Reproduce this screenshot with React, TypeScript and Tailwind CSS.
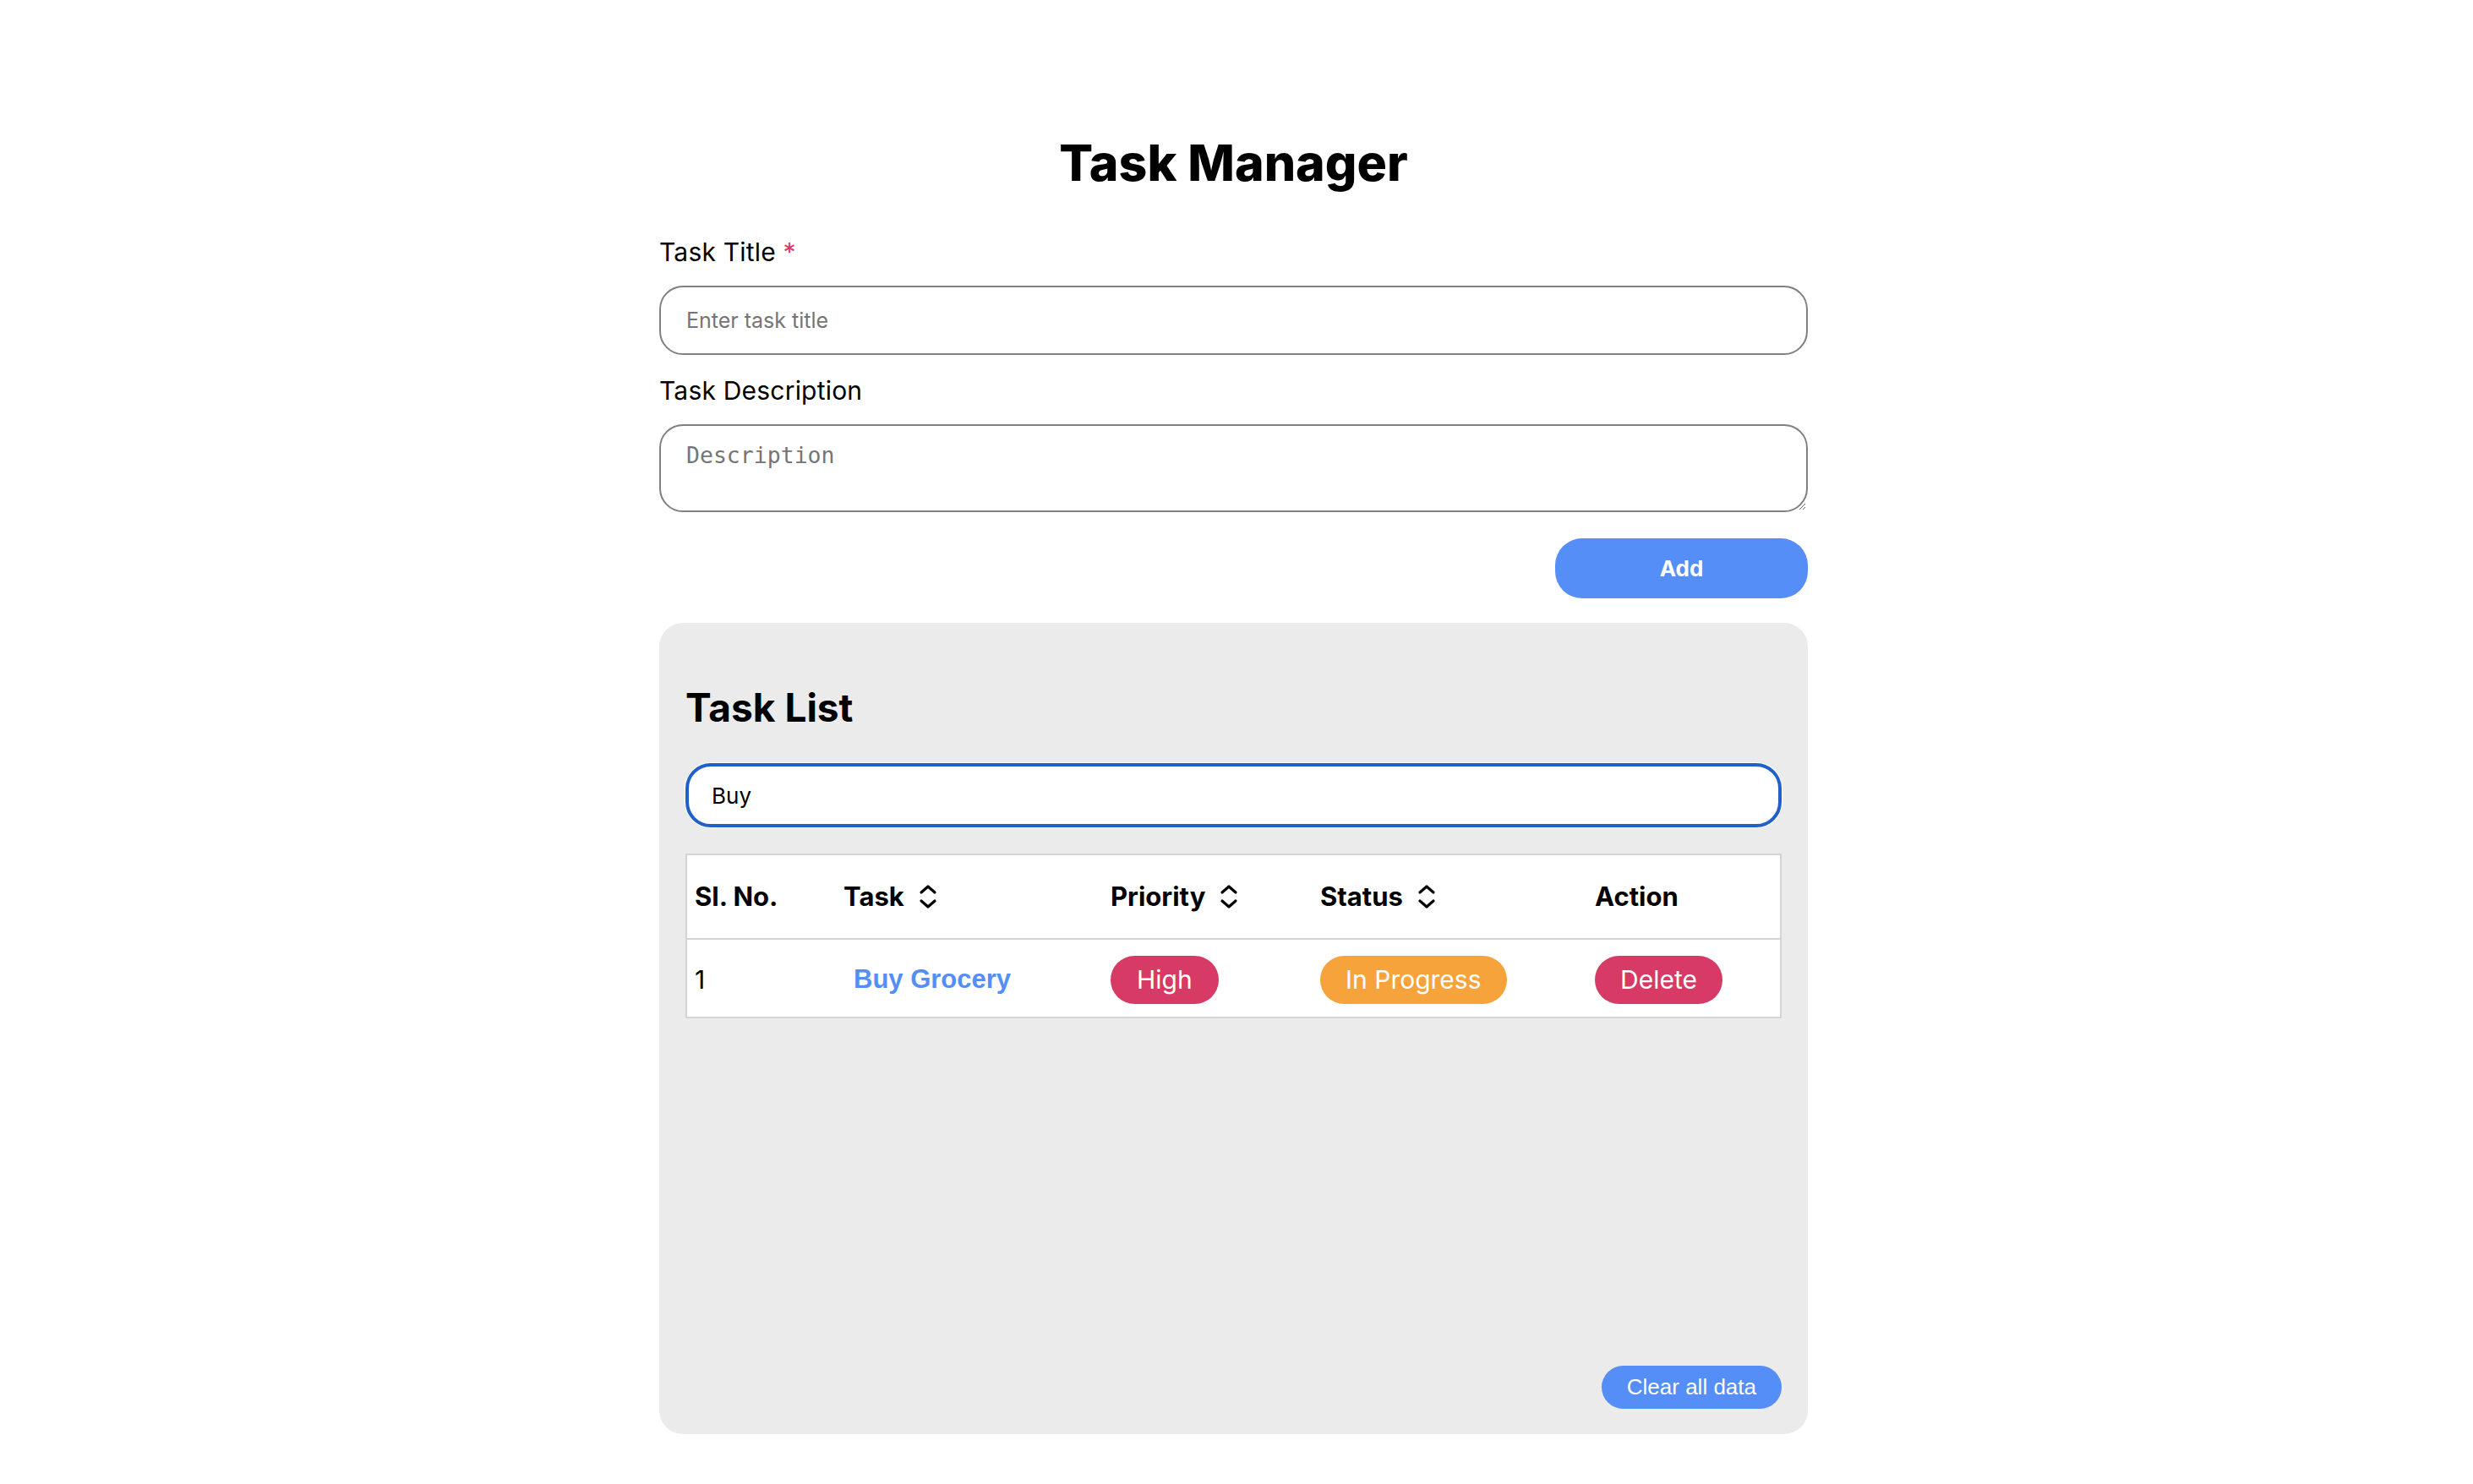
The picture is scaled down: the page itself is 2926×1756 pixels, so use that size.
import { useState } from "react";

type Task = {
  id: number;
  title: string;
  priority: string;
  status: string;
};

function SortIcon() {
  return (
    <svg
      width="24"
      height="32"
      viewBox="0 0 24 32"
      fill="none"
      stroke="currentColor"
      strokeWidth="3.2"
      strokeLinecap="round"
      strokeLinejoin="round"
      className="ml-[16px] shrink-0"
    >
      <path d="M4 11 L12 4 L20 11" />
      <path d="M4 21 L12 28 L20 21" />
    </svg>
  );
}

export default function App() {
  const [search, setSearch] = useState("Buy");
  const [tasks] = useState<Task[]>([
    { id: 1, title: "Buy Grocery", priority: "High", status: "In Progress" },
  ]);

  const visible = tasks.filter((t) =>
    t.title.toLowerCase().includes(search.toLowerCase())
  );

  return (
    <div className="min-h-screen bg-white font-['Inter',sans-serif] text-black">
      <div className="ml-[calc(50%-683px)] flex w-[1359px] flex-col pt-[158px]">
        <h1 className="text-center text-[59px] font-extrabold leading-[70px]">
          Task Manager
        </h1>

        <label className="mt-[52px] block text-[30px] leading-[36px] tracking-[0.2px]">
          Task Title <span className="text-[#d63a65]">*</span>
        </label>
        <input
          placeholder="Enter task title"
          className="mt-[22px] h-[82px] w-full rounded-[28px] border-2 border-[#808080] bg-white px-[30px] text-[25px] placeholder:text-[#757575] focus:outline-none"
        />

        <label className="mt-[24px] block text-[30px] leading-[36px] tracking-[0.2px]">
          Task Description
        </label>
        <textarea
          placeholder="Description"
          className="mt-[22px] h-[104px] w-full rounded-[28px] border-2 border-[#808080] bg-white px-[30px] pt-[15px] font-['DejaVu_Sans_Mono',monospace] text-[26.5px] placeholder:text-[#757575] focus:outline-none"
        />

        <button className="mt-[31px] h-[71px] w-[299px] self-end rounded-[32px] bg-[#548ef6] text-[26px] font-bold text-white">
          Add
        </button>

        <section className="mt-[29px] flex h-[960px] flex-col rounded-[28px] bg-[#ebebeb] px-[31px] pb-[30px] pt-[72px]">
          <h2 className="text-[46px] font-bold leading-[56px]">Task List</h2>

          <input
            value={search}
            onChange={(e) => setSearch(e.target.value)}
            className="mt-[38px] h-[76px] w-full rounded-[30px] border-4 border-[#2160c8] bg-white px-[27px] text-[26px] shadow-[0_0_0_1px_#ffffff] outline-none"
          />

          <div className="mt-[31px] border-2 border-[#d4d4d4] bg-white">
            <div className="grid h-[100px] grid-cols-[176px_316px_248px_325px_1fr] items-center border-b-2 border-[#d4d4d4] text-[31px] font-bold">
              <div className="px-[9px]">Sl. No.</div>
              <div className="flex items-center px-[9px]">
                Task
                <SortIcon />
              </div>
              <div className="flex items-center px-[9px]">
                Priority
                <SortIcon />
              </div>
              <div className="flex items-center px-[9px]">
                Status
                <SortIcon />
              </div>
              <div className="px-[9px]">Action</div>
            </div>

            {visible.map((t, i) => (
              <div
                key={t.id}
                className="grid h-[91px] grid-cols-[176px_316px_248px_325px_1fr] items-center pt-[3px] text-[30px]"
              >
                <div className="px-[9px]">{i + 1}</div>
                <div className="px-[9px]">
                  <span className="pl-[12px] font-['Liberation_Sans',Arial,sans-serif] text-[31px] font-bold text-[#548ef6]">
                    {t.title}
                  </span>
                </div>
                <div className="px-[9px]">
                  <span className="inline-flex h-[57px] items-center rounded-full bg-[#d63a65] px-[31px] text-white">
                    {t.priority}
                  </span>
                </div>
                <div className="px-[9px]">
                  <span className="inline-flex h-[57px] items-center rounded-full bg-[#f5a33a] px-[30px] text-white">
                    {t.status}
                  </span>
                </div>
                <div className="px-[9px]">
                  <button className="inline-flex h-[57px] items-center rounded-full bg-[#d63a65] px-[30px] text-white">
                    Delete
                  </button>
                </div>
              </div>
            ))}
          </div>

          <button className="mt-auto h-[51px] self-end rounded-full bg-[#548ef6] px-[30px] font-['Liberation_Sans',Arial,sans-serif] text-[26px] text-white">
            Clear all data
          </button>
        </section>
      </div>
    </div>
  );
}
